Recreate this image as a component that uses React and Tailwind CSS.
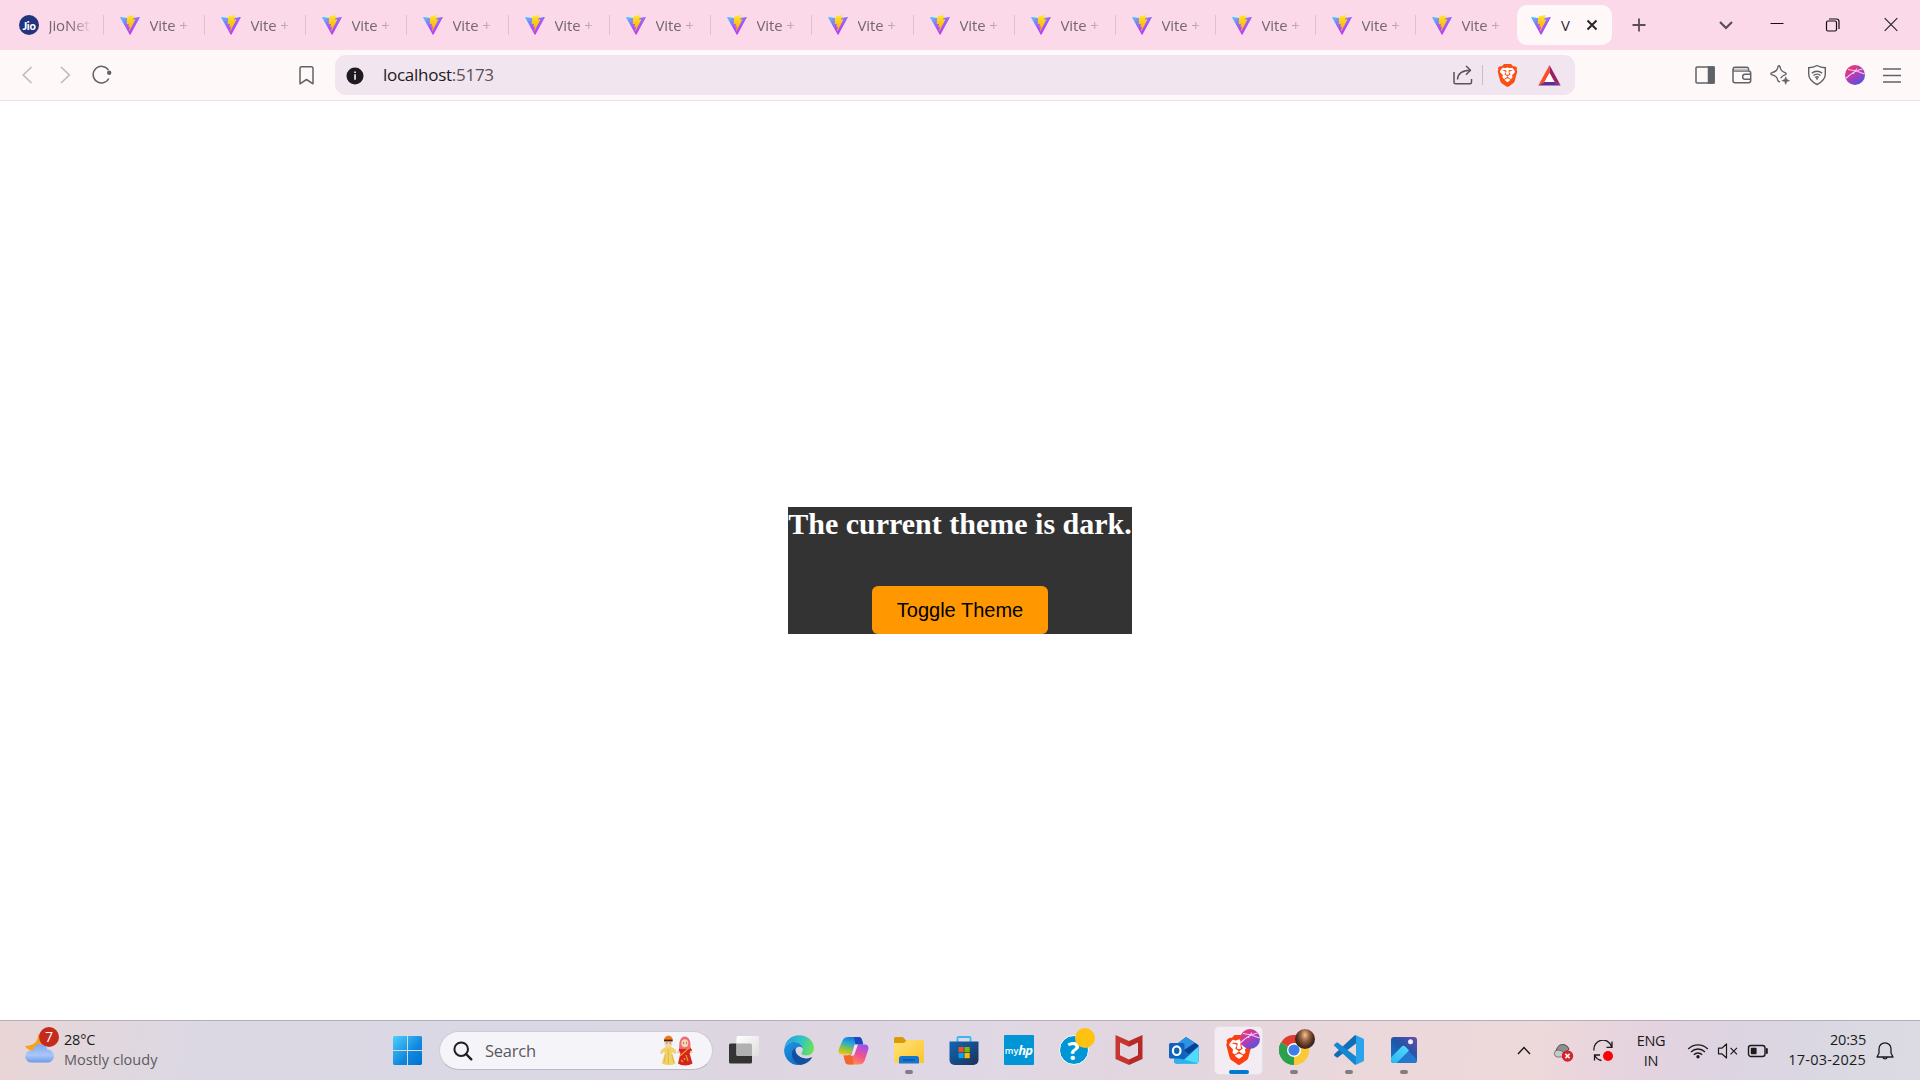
import React from "react";
import { SiBrave } from "react-icons/si";

const tabWidths = [
  "w-[101px]", "w-[101px]", "w-[101px]", "w-[101px]", "w-[102px]", "w-[101px]", "w-[101px]",
  "w-[101px]", "w-[102px]", "w-[101px]", "w-[101px]", "w-[100px]", "w-[100px]", "w-[100px]",
];

function ViteLogo({ id }) {
  return (
    <svg className="size-5 shrink-0" viewBox="0 0 20 20">
      <defs>
        <linearGradient id={`va${id}`} x1="0" y1="0" x2="0.6" y2="1">
          <stop offset="0" stopColor="#41d1ff" />
          <stop offset="0.45" stopColor="#9468fb" />
          <stop offset="1" stopColor="#bd34fe" />
        </linearGradient>
        <linearGradient id={`vb${id}`} x1="0" y1="0" x2="0" y2="1">
          <stop offset="0" stopColor="#ffe83a" />
          <stop offset="0.3" stopColor="#ffd21e" />
          <stop offset="1" stopColor="#ffa800" />
        </linearGradient>
      </defs>
      <path d="M19.8 2.6 10.5 19.4a.5.5 0 0 1-.9 0L.1 2.6a.5.5 0 0 1 .5-.7l9.4 1.6 9.3-1.6a.5.5 0 0 1 .5.7z" fill={`url(#va${id})`} />
      <path d="m14.3.1-6.9 1.3a.3.3 0 0 0-.2.3l-.5 7.2c0 .2.2.3.3.3l2-.5-.6 2.9c0 .2.1.3.3.3l1.2-.4-.9 4.5c-.1.3.3.4.4.2l.2-.2 5.7-11.3c.1-.2-.1-.4-.3-.4l-2 .4L14.6.5c0-.2-.1-.4-.3-.4z" fill={`url(#vb${id})`} />
    </svg>
  );
}

function JioLogo() {
  return (
    <div className="flex size-5 shrink-0 items-center justify-center rounded-full bg-[#22347e] font-['Lato'] text-[11px] font-black leading-none tracking-[-0.3px] text-white">
      Jio
    </div>
  );
}

function TabLabel({ children }) {
  return (
    <div className="ml-[9.5px] w-[43px] overflow-hidden whitespace-nowrap text-[15px] leading-5 tracking-[-0.1px] text-[#74656e] [mask-image:linear-gradient(to_right,black_50%,transparent_100%)]">
      {children}
    </div>
  );
}

function Tab({ width, index }) {
  return (
    <div className={`flex h-5 shrink-0 items-center border-r border-[#dcc3cf] pl-4 ${width}`}>
      {index === 0 ? <JioLogo /> : <ViteLogo id={index} />}
      <TabLabel>{index === 0 ? "JioNet" : "Vite +"}</TabLabel>
    </div>
  );
}

function TabStrip() {
  return (
    <div className="flex h-[50px] items-center bg-[#fbd9e9] pl-[3px]">
      {tabWidths.map((w, i) => (
        <Tab key={i} width={w} index={i} />
      ))}
      <div className="flex h-5 w-[101px] shrink-0 items-center pl-4">
        <ViteLogo id={14} />
        <TabLabel>Vite +</TabLabel>
      </div>
      <div className="flex h-10 w-[95px] shrink-0 items-center rounded-[10px] bg-[#fff8f8] pl-3.5">
        <ViteLogo id={15} />
        <div className="ml-2.5 w-[9px] overflow-hidden text-[15px] leading-5 text-[#33292e]">V</div>
        <svg className="ml-[15px] size-[14px]" viewBox="0 0 14 14" fill="none" stroke="#2c2529" strokeWidth="2">
          <path d="m2.5 2.500 9 9m0-9-9 9" />
        </svg>
      </div>
      <svg className="ml-[19px] size-4" viewBox="0 0 16 16" fill="none" stroke="#5a4d54" strokeWidth="1.8">
        <path d="M8 1.5v13M1.5 8h13" />
      </svg>
      <svg className="ml-[71px] size-4" viewBox="0 0 16 16" fill="none" stroke="#5a4d54" strokeWidth="2.2">
        <path d="m2 5 6 6 6-6" />
      </svg>
      <svg className="ml-[35px] size-4" viewBox="0 0 16 16" fill="none" stroke="#111" strokeWidth="1">
        <path d="M1.5 6.5h13" />
      </svg>
      <svg className="ml-10 size-4" viewBox="0 0 16 16" fill="none" stroke="#111" strokeWidth="1.2">
        <rect x="1.5" y="4" width="10" height="10" rx="1.5" />
        <path d="M4 2h7.500a2.500 2.500 0 0 1 2.500 2.500V12" />
      </svg>
      <svg className="ml-[42px] size-4" viewBox="0 0 16 16" fill="none" stroke="#222" strokeWidth="1.1">
        <path d="m1.700 1.200 12.600 12.600M14.300 1.200 1.700 13.800" />
      </svg>
    </div>
  );
}

function Avatar({ id, className }) {
  return (
    <svg className={className} viewBox="0 0 20 20">
      <defs>
        <linearGradient id={id} x1="0.1" y1="0" x2="0.8" y2="1">
          <stop offset="0" stopColor="#f43a5e" />
          <stop offset="0.5" stopColor="#b63bb5" />
          <stop offset="1" stopColor="#4a55e0" />
        </linearGradient>
      </defs>
      <circle cx="10" cy="10" r="10" fill={`url(#${id})`} />
      <path d="M.8 13.500C6 8.500 12 5 17.500 4M3 4.500c5 .5 11 2 16.500 4.500M8 9l4-5.500" stroke="#f7c9ec" strokeWidth="1.100" fill="none" />
    </svg>
  );
}

function Toolbar() {
  return (
    <div className="flex h-[51px] items-center border-b border-[#f2dbe2] bg-[#fff8f8] pl-4">
      <svg className="size-6" viewBox="0 0 24 24" fill="none" stroke="#c0b9bb" strokeWidth="1.6">
        <path d="m15.500 4-8.300 8 8.300 8" />
      </svg>
      <svg className="ml-[13px] size-6" viewBox="0 0 24 24" fill="none" stroke="#c0b9bb" strokeWidth="1.600">
        <path d="m8 4 8.300 8L8 20" />
      </svg>
      <svg className="ml-[13px] size-6" viewBox="0 0 24 24" fill="none" stroke="#5f6368" strokeWidth="1.500">
        <path d="M18.800 15.500A8.300 8.300 0 1 1 18.500 7.200" />
        <circle cx="19.200" cy="9.800" r="2.200" fill="#5f6368" stroke="none" />
      </svg>
      <svg className="ml-[180px] size-6" viewBox="0 0 24 24" fill="none" stroke="#5f6368" strokeWidth="1.500" strokeLinejoin="round">
        <path d="M7.500 3.800h10a1.500 1.500 0 0 1 1.500 1.500v15.500l-6.500-4.300L6 20.800V5.300a1.500 1.500 0 0 1 1.500-1.500z" />
      </svg>
      <div className="ml-[17px] flex h-10 w-[1240px] items-center rounded-[11px] bg-[#f1e5ef] pl-[11px]">
        <svg className="mt-0.5 size-[18px]" viewBox="0 0 18 18">
          <circle cx="9" cy="9" r="8.500" fill="#1f1a1d" />
          <path d="M8.200 4.500h1.700v1.600H8.200zM8.200 7.300h1.700v5.500H8.200z" fill="#f1e5ef" />
        </svg>
        <div className="ml-[19px] text-[17px] leading-6 tracking-[-0.270px] text-[#201a1d]">
          localhost<span className="text-[#5a4f56]">:5173</span>
        </div>
        <svg className="ml-auto size-[22px]" viewBox="0 0 22 22" fill="none" stroke="#5b5258" strokeWidth="1.500" strokeLinejoin="round">
          <path d="M2 8v10.200A1.500 1.500 0 0 0 3.500 19.700H18a1.500 1.500 0 0 0 1.500-1.500V15" />
          <path d="M5.500 15.500c.3-5.500 4.500-9 12.500-9.200M14 2l4.500 4.300L14 10.800" />
        </svg>
        <div className="ml-2 h-5 w-px bg-[#c9bcc8]" />
        <div className="relative ml-[12px] flex size-6 items-center justify-center">
          <div className="absolute size-4 rounded-full bg-white" />
          <SiBrave className="relative size-[23px] text-[#fb4f14]" />
        </div>
        <svg className="ml-[19px] mr-[14px] size-[23px]" viewBox="0 0 23 23">
          <path d="M11.500 1 .3 21.500l6.200-3.500 5-9z" fill="#ff4a25" />
          <path d="M11.500 1v8l5 9 6.200 3.500z" fill="#9e1f63" />
          <path d="M.3 21.500h22.400L16.500 18h-10z" fill="#662d91" />
          <path d="m11.500 9-5 9h10z" fill="#fff" />
        </svg>
      </div>
      <div className="ml-[111px] grid w-[225px] grid-cols-6 place-items-center">
        <svg className="size-[22px]" viewBox="0 0 22 22" fill="none" stroke="#5f6368" strokeWidth="1.500">
          <rect x="2" y="3" width="18" height="16" rx="1" />
          <path d="M14.500 3H20v16h-5.500z" fill="#5f6368" />
        </svg>
        <svg className="size-[22px]" viewBox="0 0 22 22" fill="none" stroke="#5f6368" strokeWidth="1.500">
          <path d="M17.500 7V5A1.800 1.800 0 0 0 15.700 3.200H4A2 2 0 0 0 2 5v11.800a2 2 0 0 0 2 2h13.500a2.200 2.200 0 0 0 2.200-2.200V9.200A2.200 2.200 0 0 0 17.500 7H4a2 2 0 0 1-2-2" />
          <path d="M3 4.500h14V6.500H3z" fill="#c3c0c2" stroke="none" />
          <path d="M20 10.200h-6a2.300 2.300 0 0 0-2.300 2.300v.5a2.300 2.300 0 0 0 2.300 2.300h6" />
        </svg>
        <svg className="size-[22px]" viewBox="0 0 22 22" fill="none" stroke="#5f6368" strokeWidth="1.400" strokeLinejoin="round">
          <path d="M10 1.800c.5 0 .8.400 1 1 .8 3.500 1.700 4.700 5.500 6 .8.300.8 1.500 0 1.800-2.500.8-4 1.700-4.800 3.600M10 1.800c-.5 0-.8.400-1 1-.8 3.500-1.900 4.700-6.500 6-.8.300-.8 1.500 0 1.800 4.600 1.300 5.700 2.700 6.500 6.200.3.900 1.200 1.200 1.900.500" />
          <path d="m16.700 12.800 1 2.800 2.800 1-2.800 1-1 2.800-1-2.800-2.800-1 2.800-1z" fill="#5f6368" strokeWidth=".6" />
        </svg>
        <svg className="size-[22px]" viewBox="0 0 22 22" fill="none" stroke="#5f6368" strokeWidth="1.400">
          <path d="M11 1.500c2.500 1.500 5 2.200 8.300 2.300v6.500c0 4.800-3.800 8-8.300 10.200-4.500-2.200-8.300-5.400-8.300-10.200V3.800C6 3.700 8.500 3 11 1.500z" />
          <path d="M5.800 9.200c3-2.700 7.400-2.700 10.400 0M7.500 11.500c2-1.800 5-1.800 7 0M9.200 13.500c1-.9 2.600-.9 3.600 0" />
          <circle cx="11" cy="14.800" r="1" fill="#5f6368" stroke="none" />
        </svg>
        <Avatar id="av1" className="size-5" />
        <svg className="size-[22px]" viewBox="0 0 22 22" fill="none" stroke="#5f6368" strokeWidth="1.500">
          <path d="M2 5h18M2 11.500h18M2 18h18" />
        </svg>
      </div>
    </div>
  );
}

function Page() {
  return (
    <main className="flex h-[919px] items-center justify-center bg-white pt-5">
      <div className="flex h-[127px] w-[344px] flex-col items-center bg-[#333333]">
        <h1 className="whitespace-nowrap font-['Liberation_Serif'] text-[30px] font-bold leading-[33px] text-white">
          The current theme is dark.
        </h1>
        <button className="mt-[46px] h-12 w-44 rounded-[6px] bg-[#ff9800] font-['Liberation_Sans'] text-[20px] text-black">
          Toggle Theme
        </button>
      </div>
    </main>
  );
}

function Weather() {
  return (
    <div className="flex w-[393px] items-center pl-[23px]">
      <div className="relative mt-[-4px] h-9 w-9">
        <svg className="absolute left-0 top-0 h-9 w-9" viewBox="0 0 36 36">
          <defs>
            <linearGradient id="cld" x1="0" y1="0" x2="0" y2="1">
              <stop offset="0" stopColor="#7fa6ef" />
              <stop offset="0.6" stopColor="#a9c8fa" />
              <stop offset="1" stopColor="#6e9ae8" />
            </linearGradient>
          </defs>
          <path d="M15 3c.5 7-4 12-13 12 2 3.500 5 5 9 5h10V5c-2-1.500-4-2-6-2z" fill="#f4a21f" />
          <path d="M8.500 31.500a6 6 0 0 1-.5-12c.800-.1 1.500 0 2 .2C11 15.500 13.500 13 17 13s6.500 2 7.500 5.500a6.600 6.600 0 0 1 1.500 13z" fill="url(#cld)" />
        </svg>
        <div className="absolute left-4 top-[-4px] flex size-5 items-center justify-center rounded-full bg-[#c42b1c] text-[14px] leading-none text-white">7</div>
      </div>
      <div className="ml-[5px] mt-[-2px] text-[14.500px] leading-5">
        <div className="tracking-[-0.2px] text-[#1b1b1b]">28°C</div>
        <div className="tracking-[0.050px] text-[#5d5a60]">Mostly cloudy</div>
      </div>
    </div>
  );
}

function Figures() {
  return (
    <svg className="h-[31px] w-[33px]" viewBox="0 0 33 31">
      <path d="M2 28.500C3 23 5 20 4.500 17L2 18 1 15l4.500-3h6L16 15l-1 3-2.500-1c-.5 3 1.500 7 3 11.500-4 2-9.500 2-13.500 0z" fill="#f0d468" />
      <path d="M8.300 14v15M12 20l2 8M5.500 20l-1.500 8" stroke="#dcae3c" strokeWidth=".8" />
      <circle cx="1.500" cy="17.500" r="1.300" fill="#f4c39c" />
      <circle cx="15" cy="17.500" r="1.300" fill="#f4c39c" />
      <ellipse cx="8.300" cy="8.200" rx="4" ry="4.200" fill="#f8d2ae" />
      <path d="M4 5C4.500 2 6 1 8.300.5 11 1 12.500 2 12.700 5z" fill="#ee7a1e" />
      <path d="M4 4.600h8.700v1.800H4z" fill="#4a2617" />
      <path d="M20 12h10l2 3-1 3-1.500 0 3 10.500c-4 2.500-11 2.500-14.500 0l2.500-10.500-2-1 .5-3z" fill="#d3251c" />
      <path d="M19.500 14c-1-7 1-12.500 5.300-12.500S31.500 7 30 14z" fill="#ee6878" />
      <ellipse cx="24.800" cy="8.300" rx="3.500" ry="4" fill="#f8d2ae" />
      <circle cx="18.500" cy="17" r="1.300" fill="#f4c39c" />
      <circle cx="31.200" cy="17" r="1.300" fill="#f4c39c" />
      <path d="m29 13-9 8M21 25l2 2M26 20l2 6M24 23l1 2" stroke="#f29a2e" strokeWidth="1.200" />
      <path d="M6.300 8h1M9.500 8h1M23 8h1M26 8h1" stroke="#5a3428" strokeWidth="1" />
    </svg>
  );
}

function SearchBox() {
  return (
    <div className="ml-[17px] flex h-[39px] w-[274px] items-center rounded-full border border-[#cfcbd6] border-b-[#bcb8c2] bg-[#f5f4f8] pl-[13px]">
      <svg className="size-5" viewBox="0 0 20 20" fill="none" stroke="#1f1f1f" strokeWidth="2">
        <circle cx="8.200" cy="8.200" r="6.800" />
        <path d="m13 13 5.300 5.300" strokeWidth="2.400" strokeLinecap="round" />
      </svg>
      <div className="ml-3 text-[16.500px] leading-6 tracking-[-0.250px] text-[#5b595e]">Search</div>
      <div className="ml-auto mr-[19px]">
        <Figures />
      </div>
    </div>
  );
}

function TaskView() {
  return (
    <svg className="size-8" viewBox="0 0 32 32">
      <defs>
        <linearGradient id="tv" x1="0" y1="0" x2="1" y2="1"><stop stopColor="#fff" /><stop offset="1" stopColor="#dedede" /></linearGradient>
      </defs>
      <rect x="1" y="9.500" width="23" height="20" rx="1.500" fill="#343434" />
      <rect x="8.500" y="2" width="22.500" height="20" rx="1.500" fill="url(#tv)" />
      <path d="M8.500 9.500H22.500a1.500 1.500 0 0 1 1.500 1.500v11H10a1.500 1.500 0 0 1-1.500-1.500z" fill="#b1b1b1" />
    </svg>
  );
}

function Edge() {
  return (
    <svg className="size-[30px]" viewBox="0 0 30 30">
      <defs>
        <linearGradient id="ed1" x1="0" y1="0.300" x2="1" y2="0.600">
          <stop stopColor="#1f9fe0" /><stop offset="0.500" stopColor="#31c3c7" /><stop offset="1" stopColor="#6be353" />
        </linearGradient>
        <linearGradient id="ed2" x1="0" y1="0" x2="0.700" y2="1"><stop stopColor="#1e96e0" /><stop offset="1" stopColor="#1268c4" /></linearGradient>
      </defs>
      <path d="M.3 13.500C1.300 5.500 7.500.2 15 .2c8.500 0 15 6 15 12.800 0 4.500-3.300 7.500-7.500 7.500-3 0-5.200-1-5.200-2.300 0-.8 1.500-1.500 1.500-3.800C18.800 10 14.500 7 9.700 7 5 7 1.500 9.800.3 13.500z" fill="url(#ed1)" />
      <path d="M.2 14C1.500 9.700 5.200 7 9.700 7c4.500 0 8.600 2.500 9.100 6.400-1-1.400-2.500-1.900-4-1.700-3.300.5-5 4-4 7.800 1.200 5 6 7.500 11 6.500-2.300 3-5.200 4-7.500 4C6 30-.6 22.500.2 14z" fill="url(#ed2)" />
      <path d="M11.500 12.700c-3.500 2.300-4.500 6.500-2.500 10.700 1.700 3.800 5.200 6.300 8.800 6.300 4.500-1 7.900-3.500 9.800-6.500.5-.7-.1-1.200-.8-.8-2 1-4.300 1.300-6.300.9-6-1-10-5.600-9-10.600z" fill="#11509c" />
    </svg>
  );
}

function Copilot() {
  return (
    <svg className="size-[31px]" viewBox="0 0 31 31">
      <defs>
        <linearGradient id="cp1" x1="0.600" y1="0" x2="0.200" y2="1">
          <stop stopColor="#1c6fdc" /><stop offset="0.350" stopColor="#23a8d8" /><stop offset="0.700" stopColor="#8cc63f" /><stop offset="1" stopColor="#f2c21a" />
        </linearGradient>
        <linearGradient id="cp2" x1="0.700" y1="0" x2="0.200" y2="1">
          <stop stopColor="#a14ff0" /><stop offset="0.450" stopColor="#f0518e" /><stop offset="1" stopColor="#ff9a4a" />
        </linearGradient>
      </defs>
      <path d="M11 2h9.500c2 0 3 1.200 3.500 3l1.300 4.500h-4c-2.300 0-3.500 1-4.200 3l-2 7H4C1 19.500 0 17 .8 14.200L4.500 5.500C5.500 3 7.500 2 11 2z" fill="url(#cp1)" />
      <path d="M16 2h4.500c2 0 3 1.200 3.500 3l1.300 4.500h-4c-1.600 0-2.700.5-3.400 1.500z" fill="#1b46c2" />
      <path d="M20 29.500h-9.500c-2 0-3-1.200-3.500-3l-1.500-6h4c2.300 0 3.500-1 4.200-3l2.300-8H27c3 0 4 2.500 3.200 5.300L26.500 26c-1 2.500-3 3.500-6.500 3.500z" fill="url(#cp2)" />
      <path d="M5.500 20.500h4c2 0 3.300-.8 4-2.500l2.500 11.500h-5.500c-2 0-3-1.200-3.500-3z" fill="#f0682f" />
      <path d="m16.500 9.500 3.500 0-4 11-4 .2c1.200-.6 1.600-1.500 2-3z" fill="#e7e4f5" />
    </svg>
  );
}

function Folder() {
  return (
    <svg className="size-[30px]" viewBox="0 0 30 30">
      <defs>
        <linearGradient id="fo" x1="0" y1="0" x2="1" y2="1"><stop stopColor="#ffe27a" /><stop offset="1" stopColor="#fcc42a" /></linearGradient>
      </defs>
      <path d="M0 3.500A1.500 1.500 0 0 1 1.500 2H9l3 3.500h16.500A1.500 1.500 0 0 1 30 7v4H0z" fill="#dc9a06" />
      <path d="M0 8h10l3-3h17v23H1.500A1.500 1.500 0 0 1 0 26.500z" fill="url(#fo)" />
      <path d="M5 28.500V23.500A2.500 2.500 0 0 1 7.500 21h15A2.500 2.500 0 0 1 25 23.500v5z" fill="#1377cf" />
      <path d="M9 25h12" stroke="#0a4f96" strokeWidth="1.200" />
    </svg>
  );
}

function Store() {
  return (
    <svg className="size-[30px]" viewBox="0 0 30 30">
      <defs>
        <linearGradient id="st" x1="0" y1="0" x2="1" y2="1"><stop stopColor="#0f66b8" /><stop offset="1" stopColor="#1e3157" /></linearGradient>
      </defs>
      <path d="M8.500 7V3a1 1 0 0 1 1-1h11a1 1 0 0 1 1 1v4" fill="none" stroke="#36b9f0" strokeWidth="1.800" />
      <path d="M.5 6.500h29V25a5 5 0 0 1-5 5h-19a5 5 0 0 1-5-5z" fill="url(#st)" />
      <path d="M9.500 12H14.700v5.200H9.500z" fill="#f25022" />
      <path d="M15.500 12h5.200v5.200h-5.200z" fill="#7fba00" />
      <path d="M9.500 18H14.700v5.200H9.500z" fill="#00a4ef" />
      <path d="M15.500 18h5.200v5.200h-5.200z" fill="#ffb900" />
    </svg>
  );
}

function MyHp() {
  return (
    <div className="flex size-[30px] items-center justify-center rounded-[1px] bg-[#0096d6] leading-none text-white">
      <span className="text-[9px] font-semibold">my</span>
      <span className="text-[13px] font-bold italic tracking-[-0.8px]">hp</span>
    </div>
  );
}

function Help() {
  return (
    <div className="relative flex size-[30px] items-center justify-center rounded-full border-[1.500px] border-white bg-[#0096d6] font-['Open_Sans'] text-[25px] font-bold leading-none text-white">
      ?
      <div className="absolute left-[15px] top-[-8px] size-5 rounded-full bg-[#ffc20e]" />
    </div>
  );
}

function McAfee() {
  return (
    <svg className="size-[30px]" viewBox="0 0 30 30">
      <path d="m1.500 0 13.500 6V30L1.500 24z" fill="#c8352f" />
      <path d="m28.500 0-13.500 6V30l13.500-6z" fill="#b52a27" />
      <path d="m6 7.500 9 4.200 9-4.200v12.800l-9 4.200-9-4.200z" fill="#e2d7e0" />
    </svg>
  );
}

function Outlook() {
  return (
    <svg className="size-[30px]" viewBox="0 0 30 30">
      <path d="M5 11 17 2l12.500 8v16a2.500 2.500 0 0 1-2.500 2.500H7.500A2.500 2.500 0 0 1 5 26z" fill="#1466c0" />
      <path d="M8 9 17 2l9 6-10 7z" fill="#2b94e4" />
      <path d="m15 15 11-7 3.500 3-10 8z" fill="#0c3f93" />
      <path d="M29.500 11.500V26a2.500 2.500 0 0 1-2.500 2.500H11z" fill="#4fdcfa" />
      <path d="M5 22l24 6.200c-.6.200-1.200.3-2 .3H7.500A2.500 2.500 0 0 1 5 26z" fill="#27b5ee" />
      <rect x="0" y="8" width="15.500" height="15.500" rx="1.500" fill="#0f62bd" />
      <ellipse cx="7.700" cy="15.700" rx="3.800" ry="4.300" fill="none" stroke="#fff" strokeWidth="2.200" />
    </svg>
  );
}

function BraveTask() {
  return (
    <div className="relative flex size-[30px] items-center justify-center">
      <div className="absolute size-5 rounded-full bg-white" />
      <SiBrave className="relative size-[30px] text-[#fb3f10]" />
      <Avatar id="av2" className="absolute left-4 top-[-6px] size-5" />
    </div>
  );
}

function Chrome() {
  return (
    <div className="relative size-[30px]">
      <svg className="size-[30px]" viewBox="0 0 30 30">
        <path d="M15 15 2 7.500A15 15 0 0 1 28 7.500z" fill="#e33b2e" />
        <path d="M15 15 28 7.500A15 15 0 0 1 15 30z" fill="#fcc934" />
        <path d="M15 15v15A15 15 0 0 1 2 7.500z" fill="#2da04e" />
        <path d="M15 8h13.200A15 15 0 0 1 15 30l6.200-11.500z" fill="#fcc934" />
        <path d="M2 7.500 8.800 19l6.200 3.500L14.500 30A15 15 0 0 1 2 7.500z" fill="#2da04e" />
        <circle cx="15" cy="15" r="7" fill="#fff" />
        <circle cx="15" cy="15" r="5.600" fill="#3f7de8" />
      </svg>
      <div className="absolute left-4 top-[-6px] size-5 rounded-full bg-[radial-gradient(ellipse_at_50%_30%,#f0c49a_0%,#9a6440_30%,#4a2c20_60%,#2a1a16_85%)]" />
    </div>
  );
}

function VsCode() {
  return (
    <svg className="size-[30px]" viewBox="0 0 30 30">
      <path d="M22 .2 29 3.500a1.700 1.700 0 0 1 1 1.500v20a1.700 1.700 0 0 1-1 1.500l-7 3.300V.2z" fill="#2ba4ec" />
      <path d="M22 .2v8.300L4 22.300a1.200 1.200 0 0 1-1.600 0L.5 20.700a1.200 1.200 0 0 1 0-1.800L20.500.6A1.800 1.800 0 0 1 22 .2z" fill="#0c6fb8" />
      <path d="M22 29.800v-8.300L4 7.700a1.200 1.200 0 0 0-1.600 0L.5 9.300a1.200 1.200 0 0 0 0 1.800l20 18.300a1.800 1.800 0 0 0 1.500.4z" fill="#1787d2" />
    </svg>
  );
}

function Photos() {
  return (
    <svg className="size-[30px]" viewBox="0 0 30 30">
      <defs>
        <linearGradient id="ph" x1="0" y1="1" x2="1" y2="0"><stop stopColor="#1183da" /><stop offset="0.500" stopColor="#1d55a8" /><stop offset="1" stopColor="#6a4ba8" /></linearGradient>
        <linearGradient id="ph2" x1="0" y1="1" x2="1" y2="0"><stop stopColor="#28b8f2" /><stop offset="1" stopColor="#5ad8fb" /></linearGradient>
      </defs>
      <rect x="2" y="2" width="26" height="26" rx="3" fill="url(#ph)" />
      <path d="m2 24 11-11.200a2.500 2.500 0 0 1 3.500 0L28 24.500V25a3 3 0 0 1-3 3H5a3 3 0 0 1-3-3z" fill="#2379d0" />
      <path d="m2 22.500 10.500-10.700a2.800 2.800 0 0 1 4 0L20 15.500 7.500 28H5a3 3 0 0 1-3-3z" fill="url(#ph2)" />
      <circle cx="21.500" cy="6.800" r="2.500" fill="#f0ecfa" />
    </svg>
  );
}

function TaskItem({ children, running, active }) {
  return (
    <div className="flex w-[55px] justify-center">
      <div
        className={
          active
            ? "flex h-[49px] w-[49px] flex-col items-center rounded-[5px] border border-[#e6dde5] bg-[#f3edf3] pt-2"
            : "flex h-[49px] w-[49px] flex-col items-center pt-[9px]"
        }
      >
        <div className="flex h-[30px] items-center">{children}</div>
        {active && <div className="mt-[5px] h-1 w-5 rounded-full bg-[#0078d4]" />}
        {running && <div className="mt-[5px] h-1 w-2 rounded-full bg-[#857c83]" />}
      </div>
    </div>
  );
}

function Tray() {
  return (
    <div className="ml-auto flex items-center text-[#1b1b1b]">
      <svg className="size-4" viewBox="0 0 16 16" fill="none" stroke="currentColor" strokeWidth="1.500">
        <path d="m2 11 6-6.500L14 11" />
      </svg>
      <svg className="ml-5 mt-1 h-5 w-[22px]" viewBox="0 0 22 20">
        <path d="M5 13.500a4.500 4.500 0 0 1-.5-6.500C5.500 3 8 1.500 10.500 1.500c3 0 5.500 1.800 6.500 4.500l-5 5z" fill="#8d8f8e" stroke="#474948" />
        <path d="M5 14a3.500 3.500 0 0 1 0-6.800c2.500-.3 4 .3 6 1.800l3 5z" fill="#c8c9c8" stroke="#555" strokeWidth=".7" />
        <circle cx="15.500" cy="13" r="5.700" fill="#d6222c" />
        <path d="m13.400 10.900 4.200 4.200m0-4.200-4.200 4.200" stroke="#fff" strokeWidth="1.500" />
      </svg>
      <svg className="ml-[18px] size-[22px]" viewBox="0 0 22 22" fill="none" stroke="#1b1b1b" strokeWidth="1.300">
        <path d="M2 10.500A9 9 0 0 1 19.500 6.500M20 1.500v5.800h-5.500M9.500 20.500a9 9 0 0 1-6.700-5M2.500 20.500v-5.500H8" />
        <circle cx="16" cy="16" r="5" fill="#fb0007" stroke="none" />
      </svg>
      <div className="ml-[22px] w-[30px] text-center text-[14.500px] leading-5 tracking-[-0.3px]">
        <div>ENG</div>
        <div>IN</div>
      </div>
      <svg className="ml-[21px] size-[22px]" viewBox="0 0 22 22" fill="none" stroke="currentColor" strokeWidth="1.300">
        <path d="M1.200 9c5.500-5.500 14.100-5.500 19.600 0M4 12c4-4 10-4 14 0M6.800 14.800c2.400-2.400 6-2.400 8.400 0" />
        <circle cx="11" cy="16.800" r="1.700" fill="currentColor" stroke="none" />
      </svg>
      <svg className="ml-[8px] size-[22px]" viewBox="0 0 22 22" fill="none" stroke="currentColor" strokeWidth="1.200">
        <path d="M1.500 8.200h3.300L9.500 4v14l-4.700-4.200H1.500z" strokeLinejoin="round" />
        <path d="m13.500 7.800 6.500 6.500m0-6.500-6.500 6.500" />
      </svg>
      <svg className="ml-[8px] size-[22px]" viewBox="0 0 22 22" fill="none" stroke="currentColor" strokeWidth="1.400">
        <rect x="1.500" y="5.500" width="16.500" height="11" rx="2.500" />
        <rect x="3.800" y="7.700" width="5.800" height="6.600" rx=".8" fill="currentColor" stroke="none" />
        <path d="M19.800 9v4" strokeWidth="2" strokeLinecap="round" />
      </svg>
      <div className="ml-4 mt-[-2px] w-[81px] whitespace-nowrap text-right text-[14.500px] leading-5 tracking-[0.2px]">
        <div className="tracking-[-0.2px]">20:35</div>
        <div>17-03-2025</div>
      </div>
      <svg className="ml-[9px] mr-[25px] size-5" viewBox="0 0 20 20" fill="none" stroke="currentColor" strokeWidth="1.300" strokeLinejoin="round">
        <path d="M10 1.800A6 6 0 0 0 4 7.800v4.200L2 16h16l-2-4V7.800a6 6 0 0 0-6-6zM7.800 16.300a2.300 2.300 0 0 0 4.400 0" />
      </svg>
    </div>
  );
}

function Taskbar() {
  return (
    <div className="flex h-[60px] items-center border-t border-[#b4aeb6] bg-[linear-gradient(100deg,#ead5d5_0%,#e3d7dc_4%,#dbd8e4_11%,#dad8e4_30%,#ddd6e1_38%,#dfd8e4_50%,#e2d6df_60%,#ecd8da_73%,#edd8da_80%,#e5d3df_85%,#ddd4e2_90%,#dad8e2_95%,#dcdbe3_100%)]">
      <Weather />
      <svg className="size-[29px]" viewBox="0 0 29 29">
        <defs>
          <linearGradient id="win" gradientUnits="userSpaceOnUse" x1="0" y1="0" x2="29" y2="29"><stop stopColor="#4fd0fb" /><stop offset="0.600" stopColor="#1087dd" /><stop offset="1" stopColor="#0072d0" /></linearGradient>
        </defs>
        <path d="M1 0h13v14H0V1zM15 0h13l1 1v13H15zM0 15h14v14H1l-1-1zM15 15h14v13l-1 1H15z" fill="url(#win)" />
      </svg>
      <SearchBox />
      <div className="ml-[3px] flex items-center">
        <TaskItem><TaskView /></TaskItem>
        <TaskItem><Edge /></TaskItem>
        <TaskItem><Copilot /></TaskItem>
        <TaskItem running><Folder /></TaskItem>
        <TaskItem><Store /></TaskItem>
        <TaskItem><MyHp /></TaskItem>
        <TaskItem><Help /></TaskItem>
        <TaskItem><McAfee /></TaskItem>
        <TaskItem><Outlook /></TaskItem>
        <TaskItem active><BraveTask /></TaskItem>
        <TaskItem running><Chrome /></TaskItem>
        <TaskItem running><VsCode /></TaskItem>
        <TaskItem running><Photos /></TaskItem>
      </div>
      <Tray />
    </div>
  );
}

export default function App() {
  return (
    <div className="h-[1080px] w-[1920px] overflow-hidden bg-white font-['Open_Sans',sans-serif]">
      <TabStrip />
      <Toolbar />
      <Page />
      <Taskbar />
    </div>
  );
}
